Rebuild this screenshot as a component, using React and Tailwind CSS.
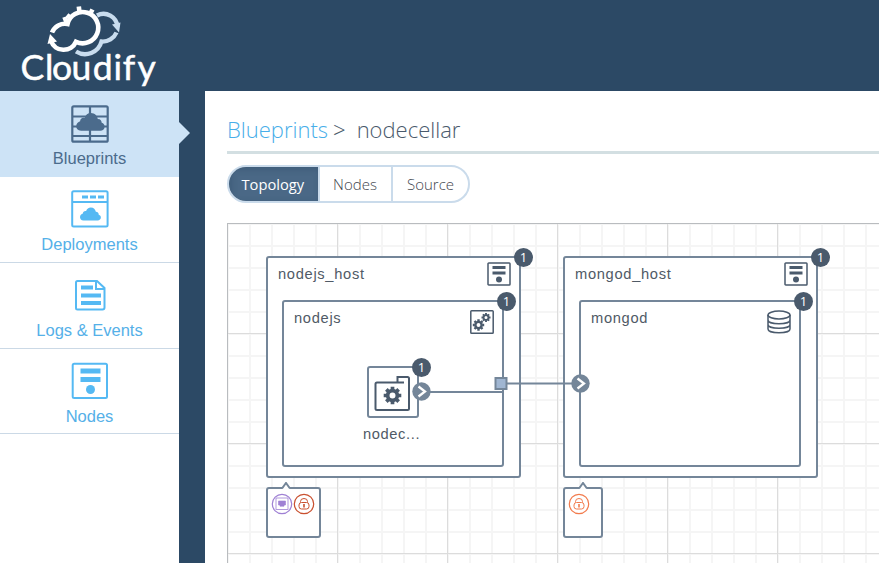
import React from "react";

const SLATE = "#4a5a6c";
const EDGE = "#748699";

function Logo() {
  return (
    <svg className="block h-[91px] w-[179px]" viewBox="0 0 179 91" fill="none">
      <g stroke="#c8dcee" strokeWidth="4.300">
        <path d="M97 15.500A14 14 0 0 1 117.500 27" />
        <path d="M116.500 32.500A15 15 0 0 1 101.500 41.500A17 17 0 0 1 76 51.500" />
      </g>
      <path d="M112 24.500l7 8 1.500-10z" fill="#c8dcee" />
      <g stroke="#fff" strokeWidth="4.600">
        <path d="M52 32.500A14 14 0 0 1 67.500 24A15.600 15.600 0 1 1 76 41.800A13.500 13.500 0 0 1 51 41" />
        <path d="M79.500 12l-.700-5.500M90 14l2.500-4.500M71.500 18.500l-4.500-3.500M67.500 25l-3-8" />
      </g>
      <path d="M47.500 44l2.500-10 7 7.500z" fill="#fff" />
      <text x="20.500 45 52 71.500 92.800 113.500 122.800 137.500" y="79.800" fill="#fff" stroke="#fff" strokeWidth=".5" className="font-[Lato,sans-serif] text-[35.500px]">Cloudify</text>
    </svg>
  );
}

function cloud(x, y, s) {
  return (
    <path transform={`translate(${x} ${y}) scale(${s})`} d="M5 18C1.500 18 0 15.500 0 13.500C0 11 2 9 4 8.500C4 6 6 4.500 8.500 5C9.500 2 12 0 15 0C19 0 21.500 3 22 6C25 6 26 8 26 10C28 10.500 29 12 29 14C29 16.500 27 18 24.500 18z" />
  );
}

function BlueprintIcon() {
  return (
    <svg width="38" height="38" viewBox="0 0 38 38" fill="none" stroke="#4b6b8c" strokeWidth="2.200">
      <rect x="1.300" y="1.300" width="35.400" height="35.400" rx="1.500" />
      <path d="M19 2v34M2 11.500h34M2 21.500h34M2 31h34" />
      <g fill="#4b6b8c" stroke="none">{cloud(5.200, 8, 0.98)}</g>
    </svg>
  );
}

function DeploymentIcon() {
  return (
    <svg width="38" height="38" viewBox="0 0 38 38" fill="none" stroke="#55b9f3" strokeWidth="2">
      <rect x="1.200" y="1.200" width="35.400" height="35.400" rx="1.500" />
      <path d="M2 12h34" />
      <path d="M11 7h6M19 7h6M27 7h6" strokeWidth="3" />
      <g fill="#55b9f3" stroke="none">{cloud(9, 17.500, 0.72)}</g>
    </svg>
  );
}

function LogsIcon() {
  return (
    <svg width="38" height="38" viewBox="0 0 38 38" fill="none" stroke="#55b9f3" strokeWidth="2">
      <path d="M6.500 5H26l7.500 7v19.500a2 2 0 0 1-2 2h-25a1.500 1.500 0 0 1-1.500-1.500V6.500A1.500 1.500 0 0 1 6.500 5zM25 5v8h8" />
      <path d="M10 11.500h12M10 19.500h20M10 27h20" strokeWidth="4" />
    </svg>
  );
}

function HostIcon({ size, color, nav }) {
  return nav ? (
    <svg width={size} height={size} viewBox="0 0 38 38" fill="none" stroke={color} strokeWidth="2">
      <rect x="1.700" y="1.700" width="34.300" height="34.300" rx="1.500" />
      <path d="M9.500 9h20M9.500 17.500h20" strokeWidth="5" />
      <circle cx="19.500" cy="27.500" r="4.500" fill={color} stroke="none" />
    </svg>
  ) : (
    <svg width={size} height={size} viewBox="0 0 24 24" fill="none" stroke={color} strokeWidth="1.500">
      <rect x="1" y="1" width="22" height="22" rx=".8" />
      <path d="M5.500 5.500h13M5.500 11h13" strokeWidth="3" />
      <circle cx="12" cy="17.500" r="3" fill={color} stroke="none" />
    </svg>
  );
}

function Gear({ x, y, r }) {
  return (
    <g transform={`translate(${x} ${y}) scale(${r / 10})`} stroke={SLATE} fill="none">
      <circle r="5.500" strokeWidth="4.200" />
      <path d="M0-6.500V-10M0 6.500V10M-6.500 0H-10M6.500 0H10M4.600-4.600L7-7M-4.600-4.600L-7-7M4.600 4.600L7 7M-4.600 4.600L-7 7" strokeWidth="4.200" />
    </g>
  );
}

function GearsIcon() {
  return (
    <svg width="24" height="24" viewBox="0 0 24 24" fill="none">
      <rect x=".8" y=".8" width="22.400" height="22.400" rx=".8" stroke={SLATE} strokeWidth="1.500" />
      <Gear x={8.500} y={15} r={5.700} />
      <Gear x={16} y={7.500} r={4.500} />
    </svg>
  );
}

function DatabaseIcon() {
  return (
    <svg width="24" height="24" viewBox="0 0 24 24" fill="none" stroke={SLATE} strokeWidth="1.500">
      <ellipse cx="12" cy="5" rx="11" ry="4" />
      <path d="M1 5v14c0 5 22 5 22 0V5M1 10c0 5 22 5 22 0M1 14.500c0 5 22 5 22 0" />
    </svg>
  );
}

function AppIcon() {
  return (
    <svg className="relative top-px -left-px" width="36" height="36" viewBox="0 0 36 36" fill="none" stroke={SLATE} strokeWidth="2">
      <path d="M30 7.500H3a1.500 1.500 0 0 0-1.500 1.500v24.500A1.500 1.500 0 0 0 3 35h30.500a1.500 1.500 0 0 0 1.500-1.500V3.500A1.500 1.500 0 0 0 33.500 2H23.500v5" />
      <Gear x={18.500} y={20.500} r={8.800} />
    </svg>
  );
}

const navItems = [
  { label: "Blueprints", icon: <BlueprintIcon />, active: true },
  { label: "Deployments", icon: <DeploymentIcon /> },
  { label: "Logs & Events", icon: <LogsIcon /> },
  { label: "Nodes", icon: <HostIcon size={38} color="#55b9f3" nav /> },
];

function NavItem({ label, icon, active }) {
  return (
    <div className={`relative flex flex-col items-center border-b ${active ? "h-[86px] border-[#cde3f6] bg-[#cde3f6] pt-[14px] text-[#4b6b8c]" : "h-[86px] border-[#cbd9e6] bg-white pt-[13px] text-[#55b0e8] last:h-[85px]"}`}>
      {icon}
      <span className={`text-[16.500px] leading-6 ${active ? "mt-[3px]" : "mt-1"}`}>{label}</span>
      {active && <span className="absolute top-[31px] left-full border-y-[11px] border-l-[11px] border-y-transparent border-l-[#cde3f6]" />}
    </div>
  );
}

function Badge({ className }) {
  return (
    <span className={`absolute flex size-[19px] items-center justify-center rounded-full bg-[#4a5a6c] font-['Open_Sans',sans-serif] text-[13px] leading-none text-white ${className}`}>1</span>
  );
}

function Host({ name, child, childIcon, className }) {
  return (
    <div className={`absolute top-[32px] h-[222px] w-[255px] rounded-[3px] border-2 border-[#748699] bg-white pt-[6px] pl-[14px] ${className}`}>
      <div className="flex h-[36px] justify-between pr-[8px]">
        <span className="-ml-[4px] pt-[1px] text-[14.700px] leading-[18px] tracking-[.68px]">{name}</span>
        <span className="-mt-[2px]"><HostIcon size={24} color={SLATE} /></span>
      </div>
      <div className="relative h-[167px] w-[222px] rounded-[3px] border-2 border-[#748699] px-[10px] pt-[7px]">
        <div className="flex justify-between">
          <span className="text-[14.700px] leading-[18px] tracking-[.68px]">{child}</span>
          <span className="-mr-[2px] pt-px">{childIcon}</span>
        </div>
        <Badge className="-top-[10px] -right-[14px]" />
      </div>
      <Badge className="-top-[10px] -right-[14px]" />
    </div>
  );
}

function GroupIcon({ color, kind }) {
  return (
    <svg width="22" height="22" viewBox="0 0 22 22" fill="none" stroke={color}>
      <circle cx="11" cy="11" r="9.700" strokeWidth="1.200" />
      {kind === "network" ? (
        <g>
          <rect x="5" y="5" width="12" height="11.500" strokeWidth=".8" />
          <path d="M7.500 8h7v4h-1.500v1.200H9V12H7.500z" fill={color} strokeWidth=".6" />
        </g>
      ) : (
        <g>
          <path d="M7.500 9.500V8.500a3.500 3 0 0 1 7 0v1" />
          <rect x="6" y="9.500" width="10" height="6.500" rx="2.500" />
          <path d="M11 11v3.500" strokeWidth="1.600" />
        </g>
      )}
    </svg>
  );
}

function GroupBox({ className, children }) {
  return (
    <div className={`absolute top-[263px] flex h-[51px] rounded-[3px] border-2 border-[#748699] bg-white pt-[4px] pl-[3px] ${className}`}>
      <svg className="absolute -top-[7px] left-[13px]" width="10" height="8" viewBox="0 0 10 8">
        <path d="M1 7L5 1l4 6v1H1z" fill="#fff" />
        <path d="M1 6.500L5 1l4 5.500" fill="none" stroke={EDGE} strokeWidth="2" />
      </svg>
      {children}
    </div>
  );
}

function Connector({ className }) {
  return (
    <svg className={`absolute ${className}`} width="19" height="19" viewBox="0 0 19 19">
      <circle cx="9.500" cy="9.500" r="9.200" fill={EDGE} />
      <path d="M6.500 4.500l6.500 5-6.500 5" fill="none" stroke="#fff" strokeWidth="2.300" />
    </svg>
  );
}

function Topology() {
  return (
    <div className="relative flex-1 overflow-hidden border-t border-l border-[#b9bcbf] text-[#505a66]">
      <svg className="absolute inset-0" width="100%" height="100%">
        <defs>
          <pattern id="minor" width="22" height="22" patternUnits="userSpaceOnUse">
            <path d="M22 0V22M0 22H22M0 0V22M0 0H22" stroke="#f5f5f5" strokeWidth="2" />
          </pattern>
          <pattern id="major" width="110" height="110" patternUnits="userSpaceOnUse">
            <rect width="110" height="110" fill="url(#minor)" />
            <path d="M109.500 0V110M0 109.500H110" stroke="#dcdcdc" />
          </pattern>
        </defs>
        <rect width="100%" height="100%" fill="url(#major)" />
      </svg>
      <Host name="nodejs_host" child="nodejs" childIcon={<GearsIcon />} className="left-[38px]" />
      <Host name="mongod_host" child="mongod" childIcon={<DatabaseIcon />} className="left-[335px]" />
      <div className="absolute top-[142px] left-[139px] flex h-[52px] w-[52px] items-center justify-center rounded-[3px] border-2 border-[#748699] bg-white">
        <AppIcon />
        <Badge className="-top-[10px] -right-[14px]" />
      </div>
      <span className="absolute top-[201px] left-[135px] text-[14.700px] leading-[18px] tracking-[.6px]">nodec...</span>
      <svg className="absolute inset-0" width="400" height="220" fill="none" stroke={EDGE} strokeWidth="2">
        <path d="M198 168H274M274 159.500H350" />
        <rect x="267.500" y="154" width="11" height="11" fill="#a0b6d2" strokeWidth="2" />
      </svg>
      <Connector className="top-[158px] left-[183.500px]" />
      <Connector className="top-[150px] left-[342.500px]" />
      <GroupBox className="left-[38px] w-[55px]">
        <GroupIcon color="#9f80d4" kind="network" />
        <GroupIcon color="#c9502f" kind="lock" />
      </GroupBox>
      <GroupBox className="left-[335px] w-[40px]">
        <GroupIcon color="#f27b4d" kind="lock" />
      </GroupBox>
    </div>
  );
}

export default function App() {
  return (
    <div className="flex h-[563px] w-[879px] flex-col overflow-hidden bg-[#2c4965] font-['Liberation_Sans',Arial,sans-serif]">
      <header className="h-[91px]"><Logo /></header>
      <div className="flex flex-1">
        <nav className="w-[179px] bg-white">
          {navItems.map((item) => <NavItem key={item.label} {...item} />)}
        </nav>
        <main className="ml-[26px] flex flex-1 flex-col bg-white pl-[22px]">
          <div className="flex h-[63px] items-start border-b-[3px] border-[#d3dfe2] pt-[22px] font-['Open_Sans',sans-serif] text-[22px] leading-8 font-light text-[#4a5a6c]">
            <span className="text-[#48aee9]">Blueprints</span>
            <span className="ml-[5px]">&gt;</span>
            <span className="ml-[11px]">nodecellar</span>
          </div>
          <div className="mt-[11px] mb-[20px] flex h-[38px] w-[243px] overflow-hidden rounded-full border-2 border-[#cadbeb] font-['Open_Sans',sans-serif] text-[15px] leading-[34px] text-[#3f464e]">
            <span className="w-[89px] bg-[#4a6886] pl-[12.500px] text-[14.700px] text-white shadow-[inset_2px_2px_6px_#2d486466]">Topology</span>
            <span className="w-[75px] border-x-2 border-[#cadbeb] pr-px text-center font-light">Nodes</span>
            <span className="flex-1 text-center font-light">Source</span>
          </div>
          <Topology />
        </main>
      </div>
    </div>
  );
}
